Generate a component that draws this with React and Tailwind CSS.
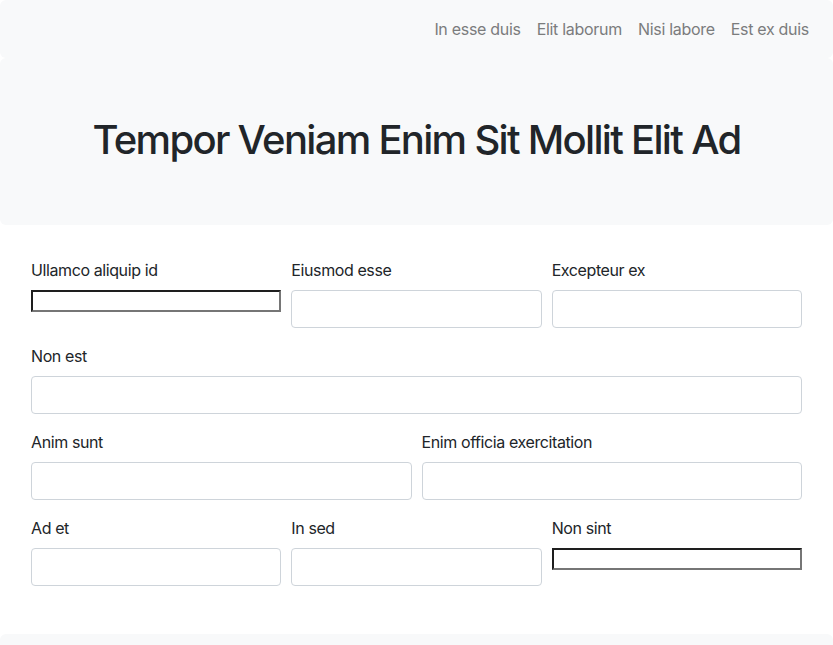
import React from 'react';

const font = { fontFamily: 'Inter, "Noto Sans", "Liberation Sans", sans-serif' };

const links = ['In esse duis', 'Elit laborum', 'Nisi labore', 'Est ex duis'];

const Field = ({ label, plain }) => (
  <div className="mb-4">
    <label className="block mb-2 text-[16px] leading-6 tracking-[-0.4px] text-[#212529]">{label}</label>
    {plain ? (
      <input
        type="text"
        className="block w-full h-[22px] bg-white border-2 border-t-[#1e1e1e] border-l-[#1e1e1e] border-b-[#767676] border-r-[#767676] outline-none"
      />
    ) : (
      <input
        type="text"
        className="block w-full h-[38px] bg-white border border-[#ced4da] rounded-[4px] outline-none"
      />
    )}
  </div>
);

export default function App() {
  return (
    <div className="min-h-[645px] bg-white" style={font}>
      {/* Nav */}
      <nav className="bg-[#f8f9fa] rounded-md h-[58px] flex items-center justify-end pr-4">
        {links.map((l) => (
          <a key={l} href="#" className="px-2 text-[16px] leading-6 tracking-[-0.3px] text-[#7b7c7d]">
            {l}
          </a>
        ))}
      </nav>

      {/* Jumbotron */}
      <header className="bg-[#f8f9fa] rounded-md h-[167px] flex items-center justify-center pb-1">
        <h1 className="text-[40px] leading-[48px] font-medium text-[#212529] tracking-[-1.7px]">
          Tempor Veniam Enim Sit Mollit Elit Ad
        </h1>
      </header>

      {/* Form */}
      <form className="px-[31px] pt-[33px] pb-8">
        <div className="grid grid-cols-3 gap-x-[10px]">
          <Field label="Ullamco aliquip id" plain />
          <Field label="Eiusmod esse" />
          <Field label="Excepteur ex" />
        </div>
        <Field label="Non est" />
        <div className="grid grid-cols-2 gap-x-[10px]">
          <Field label="Anim sunt" />
          <Field label="Enim officia exercitation" />
        </div>
        <div className="grid grid-cols-3 gap-x-[10px]">
          <Field label="Ad et" />
          <Field label="In sed" />
          <Field label="Non sint" plain />
        </div>
      </form>

      <footer className="bg-[#f8f9fa] rounded-md h-[40px]" />
    </div>
  );
}
